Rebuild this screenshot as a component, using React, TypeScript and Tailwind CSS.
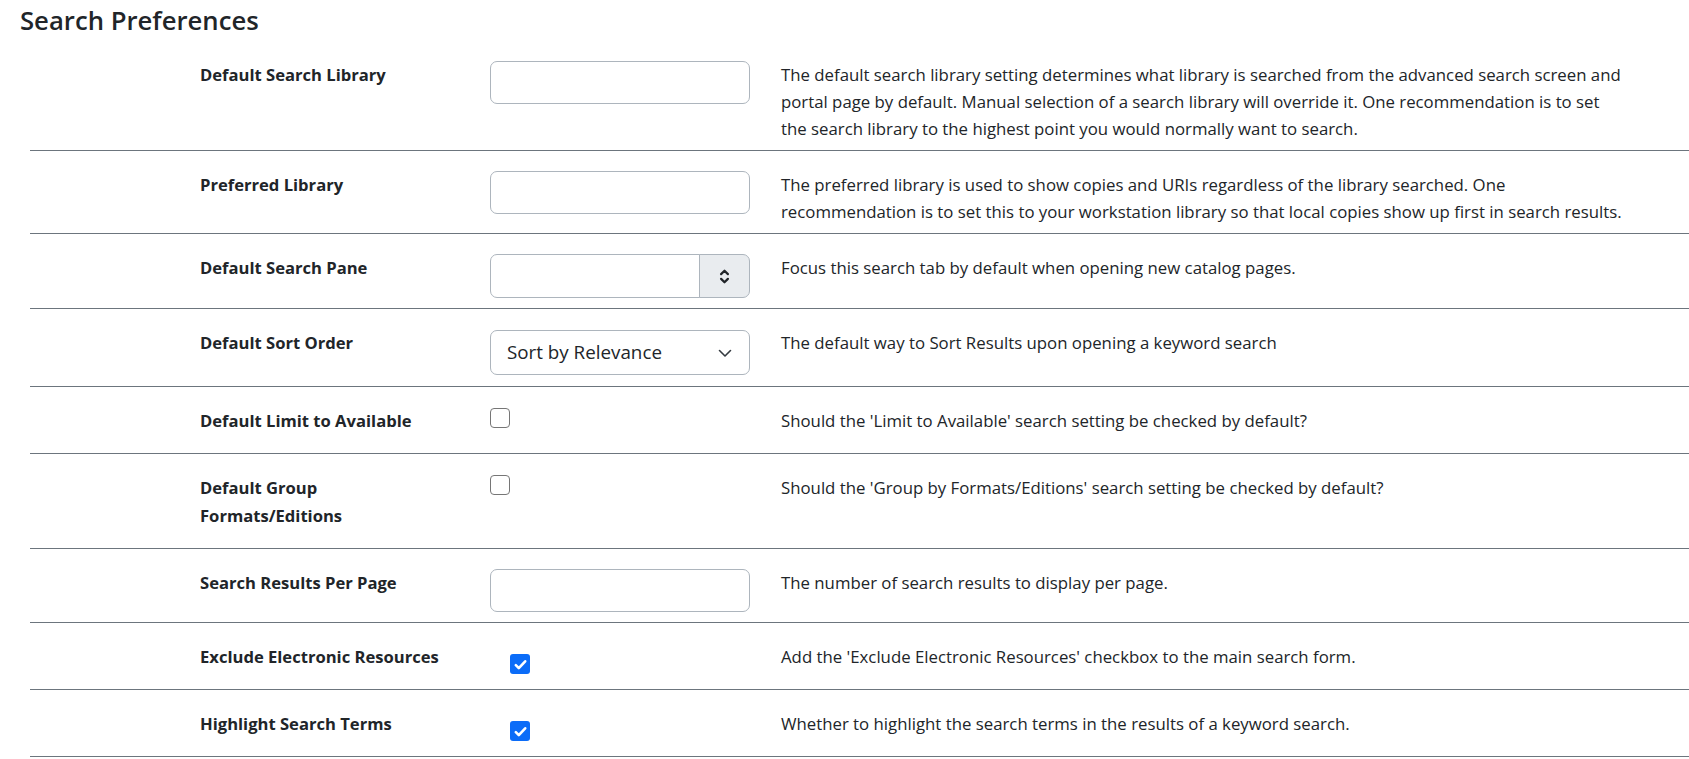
import React from "react";

const lineCls = "flex border-b border-[#6c757d] pt-[20px] pb-[8px]";

function Label({ children }: { children: React.ReactNode }) {
  return (
    <div className="w-[460px] shrink-0 pl-[170px]">
      <div className="mb-[10px] whitespace-nowrap text-[16.6px] font-bold leading-[28px] text-[#212529]">
        {children}
      </div>
    </div>
  );
}

function Desc({ children }: { children: React.ReactNode }) {
  return (
    <div className="flex-1 whitespace-nowrap text-[16.8px] leading-[27px] text-[#212529]">
      {children}
    </div>
  );
}

function TextInput() {
  return (
    <div className="mb-[2px] h-[43px] w-[260px] rounded-[7px] border border-[#adb5bd] bg-white" />
  );
}

function Unchecked() {
  return (
    <div className="mt-[1px] h-[20px] w-[20px] rounded-[4px] border border-[#767676] bg-white" />
  );
}

function Checked() {
  return (
    <div className="ml-[20px] mt-[11px] flex h-[20px] w-[20px] items-center justify-center rounded-[3px] bg-[#0b6cf8]">
      <svg width="15" height="15" viewBox="0 0 16 16" fill="none">
        <path d="M3 8.6l3.2 3.2L13 4.6" stroke="white" strokeWidth="2.8" strokeLinecap="round" strokeLinejoin="round" />
      </svg>
    </div>
  );
}

export default function App() {
  return (
    <div className="min-h-screen bg-white font-['Open_Sans',sans-serif] text-[#212529]">
      <div className="h-[41px] pl-[20px] pt-[3px]">
        <h3 className="text-[25.7px] font-semibold leading-[36px] text-[#212529]">Search Preferences</h3>
      </div>
      <div className="ml-[30px]">
        <div className={lineCls}>
          <Label>Default Search Library</Label>
          <div className="w-[291px] shrink-0">
            <TextInput />
          </div>
          <Desc>
            The default search library setting determines what library is searched from the advanced search screen and
            <br />
            portal page by default. Manual selection of a search library will override it. One recommendation is to set
            <br />
            the search library to the highest point you would normally want to search.
          </Desc>
        </div>

        <div className={lineCls}>
          <Label>Preferred Library</Label>
          <div className="w-[291px] shrink-0">
            <TextInput />
          </div>
          <Desc>
            The preferred library is used to show copies and URIs regardless of the library searched. One
            <br />
            recommendation is to set this to your workstation library so that local copies show up first in search results.
          </Desc>
        </div>

        <div className={lineCls}>
          <Label>Default Search Pane</Label>
          <div className="w-[291px] shrink-0">
            <div className="mb-[2px] flex h-[44px] w-[260px]">
              <div className="flex-1 rounded-l-[7px] border border-[#adb5bd] bg-white" />
              <div className="-ml-px flex w-[51px] items-center justify-center rounded-r-[7px] border border-[#adb5bd] bg-[#e9ecef]">
                <svg width="11" height="17" viewBox="0 0 10 16" fill="none">
                  <path d="M1.8 5.8L5 2.6l3.2 3.2" stroke="#212529" strokeWidth="2.1" strokeLinecap="round" strokeLinejoin="round" />
                  <path d="M1.8 10.2L5 13.4l3.2-3.2" stroke="#212529" strokeWidth="2.1" strokeLinecap="round" strokeLinejoin="round" />
                </svg>
              </div>
            </div>
          </div>
          <Desc>Focus this search tab by default when opening new catalog pages.</Desc>
        </div>

        <div className={lineCls}>
          <Label>Default Sort Order</Label>
          <div className="w-[291px] shrink-0">
            <div className="mb-[3px] mt-[1px] flex h-[45px] w-[260px] items-center justify-between rounded-[7px] border border-[#adb5bd] bg-white pl-[16px] pr-[16px]">
              <span className="text-[18.8px] text-[#212529]">Sort by Relevance</span>
              <svg width="16" height="12" viewBox="0 0 16 12" fill="none">
                <path d="M2.5 3.5l5.5 5.5 5.5-5.5" stroke="#343a40" strokeWidth="1.6" strokeLinecap="round" strokeLinejoin="round" />
              </svg>
            </div>
          </div>
          <Desc>The default way to Sort Results upon opening a keyword search</Desc>
        </div>

        <div className={lineCls}>
          <Label>Default Limit to Available</Label>
          <div className="w-[291px] shrink-0">
            <Unchecked />
          </div>
          <Desc>Should the 'Limit to Available' search setting be checked by default?</Desc>
        </div>

        <div className={lineCls}>
          <Label>
            Default Group
            <br />
            Formats/Editions
          </Label>
          <div className="w-[291px] shrink-0">
            <Unchecked />
          </div>
          <Desc>Should the 'Group by Formats/Editions' search setting be checked by default?</Desc>
        </div>

        <div className={lineCls}>
          <Label>Search Results Per Page</Label>
          <div className="w-[291px] shrink-0">
            <TextInput />
          </div>
          <Desc>The number of search results to display per page.</Desc>
        </div>

        <div className={lineCls}>
          <Label>Exclude Electronic Resources</Label>
          <div className="w-[291px] shrink-0">
            <Checked />
          </div>
          <Desc>Add the 'Exclude Electronic Resources' checkbox to the main search form.</Desc>
        </div>

        <div className={lineCls}>
          <Label>Highlight Search Terms</Label>
          <div className="w-[291px] shrink-0">
            <Checked />
          </div>
          <Desc>Whether to highlight the search terms in the results of a keyword search.</Desc>
        </div>
      </div>
    </div>
  );
}
